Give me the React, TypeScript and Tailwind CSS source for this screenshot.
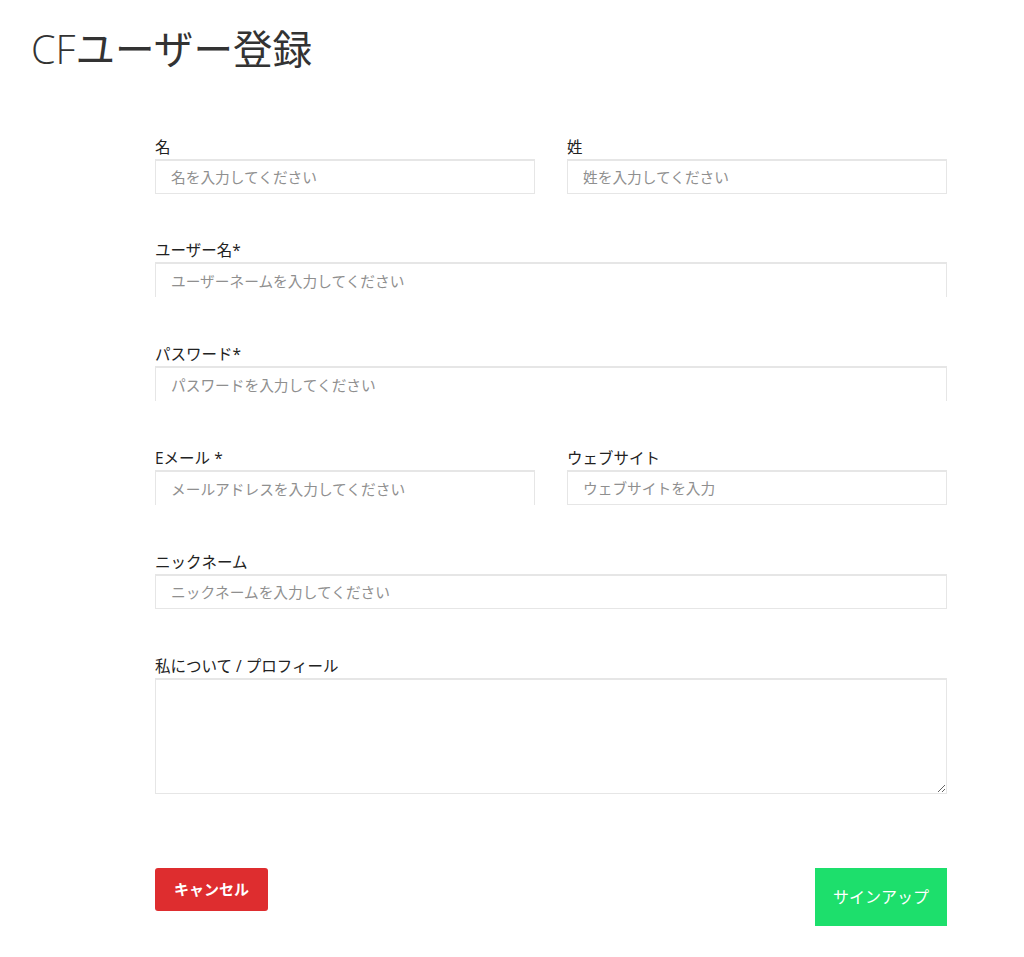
import React from "react";

const font = { fontFamily: '"Open Sans", "Noto Sans CJK JP", sans-serif' };

function Field({
  label,
  placeholder,
  noBottom,
}: {
  label: string;
  placeholder: string;
  noBottom?: boolean;
}) {
  return (
    <div className="flex flex-col">
      <label className="block h-5 text-[15.5px] leading-5 text-[#222]">{label}</label>
      <input
        type="text"
        placeholder={placeholder}
        className={
          "mt-[2px] h-[35px] w-full border border-t-2 border-[#e6e6e6] bg-white px-[15px] text-[14.7px] text-[#333] outline-none placeholder:text-[#8f8f8f] " +
          (noBottom ? "border-b-0" : "")
        }
      />
    </div>
  );
}

export default function App() {
  return (
    <div className="min-h-screen bg-white" style={font}>
      <h1 className="pl-[31px] pt-[25px] text-[39.6px] font-light leading-[48px] text-[#333]">
        CF<span className="font-normal">ユーザー登録</span>
      </h1>

      <form className="ml-[155px] mt-[64px] w-[792px]">
        <div className="grid grid-cols-2 gap-8">
          <Field label="名" placeholder="名を入力してください" />
          <Field label="姓" placeholder="姓を入力してください" />
        </div>
        <div className="mt-[46px]">
          <Field label="ユーザー名*" placeholder="ユーザーネームを入力してください" noBottom />
        </div>
        <div className="mt-[47px]">
          <Field label="パスワード*" placeholder="パスワードを入力してください" noBottom />
        </div>
        <div className="mt-[47px] grid grid-cols-2 gap-8">
          <Field label="Eメール *" placeholder="メールアドレスを入力してください" noBottom />
          <Field label="ウェブサイト" placeholder="ウェブサイトを入力" />
        </div>
        <div className="mt-[47px]">
          <Field label="ニックネーム" placeholder="ニックネームを入力してください" />
        </div>
        <div className="mt-[47px] flex flex-col">
          <label className="block h-5 text-[15.5px] leading-5 text-[#222]">
            私について / プロフィール
          </label>
          <textarea className="mt-[2px] h-[116px] w-full resize-y border border-t-2 border-[#e6e6e6] bg-white px-[15px] py-2 text-[14px] outline-none" />
        </div>

        <div className="mt-[74px] flex items-start justify-between">
          <button
            type="button"
            className="h-[43px] w-[113px] rounded-[3px] bg-[#de2d2f] text-[15px] font-bold text-white"
          >
            キャンセル
          </button>
          <button
            type="submit"
            className="h-[58px] w-[132px] bg-[#1ddf6c] text-[16px] text-white"
          >
            サインアップ
          </button>
        </div>
      </form>
    </div>
  );
}
